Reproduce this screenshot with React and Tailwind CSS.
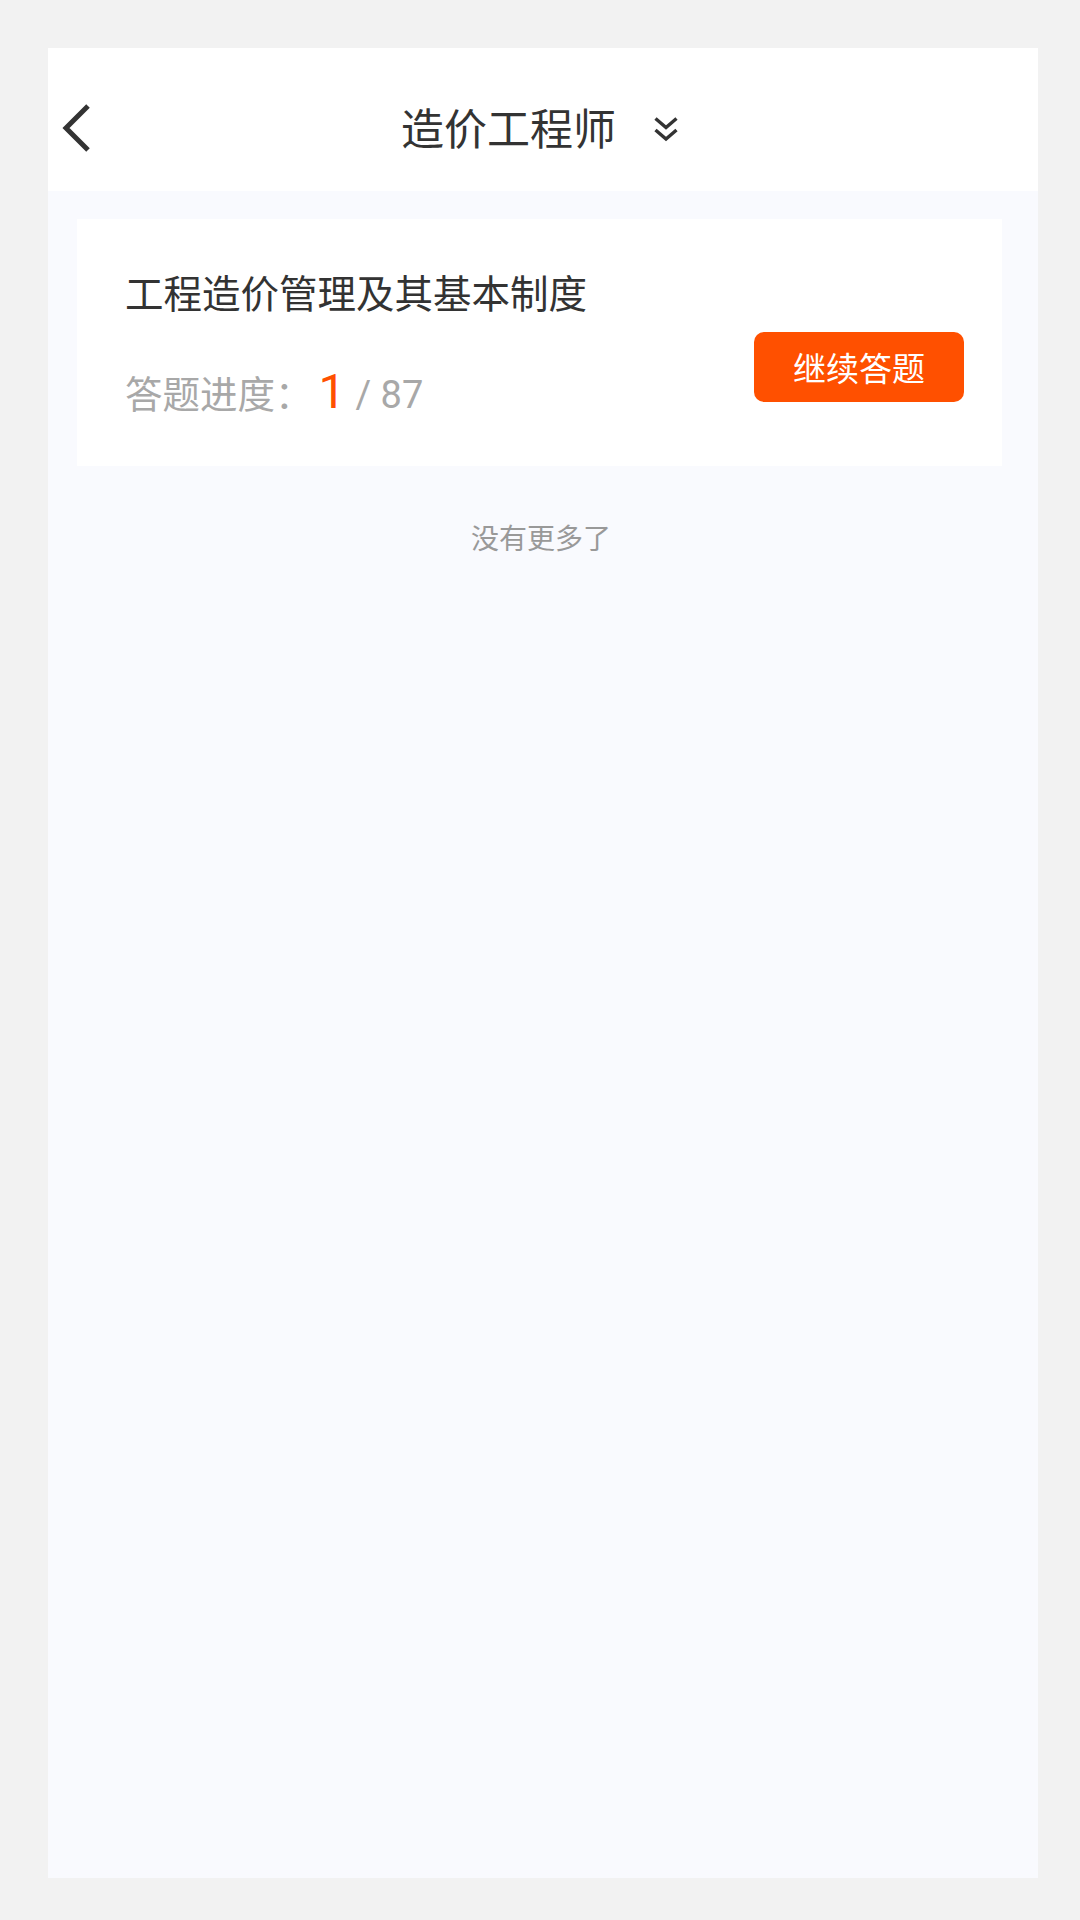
import React from "react";

const FONT = { fontFamily: '"Noto Sans CJK SC", "Noto Sans", sans-serif' };
const NUM = { fontFamily: 'Roboto, "Noto Sans CJK SC", sans-serif' };

function BackIcon() {
  return (
    <svg width="32" height="50" viewBox="0 0 32 50" fill="none">
      <path d="M27 3 L5 25 L27 47" stroke="#333333" strokeWidth="5" strokeLinecap="butt" strokeLinejoin="miter" />
    </svg>
  );
}

function DoubleDown() {
  return (
    <svg width="26" height="26" viewBox="0 0 26 26" fill="none">
      <path d="M2.5 2.5 L13 11.5 L23.5 2.5" stroke="#333333" strokeWidth="3.4" />
      <path d="M2.5 14 L13 23 L23.5 14" stroke="#333333" strokeWidth="3.4" />
    </svg>
  );
}

export default function App() {
  return (
    <div className="w-[1080px] h-[1920px] bg-[#f2f2f2] pt-[48px] px-[48px]" style={FONT}>
      <div className="w-[990px] h-[1830px] bg-[#f9fafe] flex flex-col">
        <div className="h-[143px] bg-white relative flex items-center justify-center pt-[12px] pr-[6px]">
          <div className="absolute left-[13px] top-[55px]">
            <BackIcon />
          </div>
          <span className="text-[43px] leading-[60px] text-[#333333]">造价工程师</span>
          <div className="ml-[37px] mt-[6px]">
            <DoubleDown />
          </div>
        </div>
        <div className="mt-[28px] ml-[29px] mr-[36px] h-[247px] bg-white pl-[48px] pr-[38px] pt-[49px] flex flex-col">
          <div className="text-[38.5px] leading-[46px] text-[#333333]">工程造价管理及其基本制度</div>
          <div className="mt-[18px] flex items-start justify-between">
            <div className="mt-[36px] flex items-baseline">
              <span className="text-[37.5px] leading-none text-[#a8a8a8]">答题进度：</span>
              <span className="ml-[6px] text-[48px] leading-none text-[#ff5000]" style={NUM}>1</span>
              <span className="ml-[10px] text-[38px] leading-none text-[#a8a8a8]" style={NUM}>/ 87</span>
            </div>
            <button className="w-[210px] h-[70px] rounded-[10px] bg-[#ff5000] text-white text-[33px] leading-none flex items-center justify-center" style={FONT}>
              继续答题
            </button>
          </div>
        </div>
        <div className="mt-[51px] pr-[4px] text-center text-[28px] leading-[40px] text-[#999999]">没有更多了</div>
      </div>
    </div>
  );
}
